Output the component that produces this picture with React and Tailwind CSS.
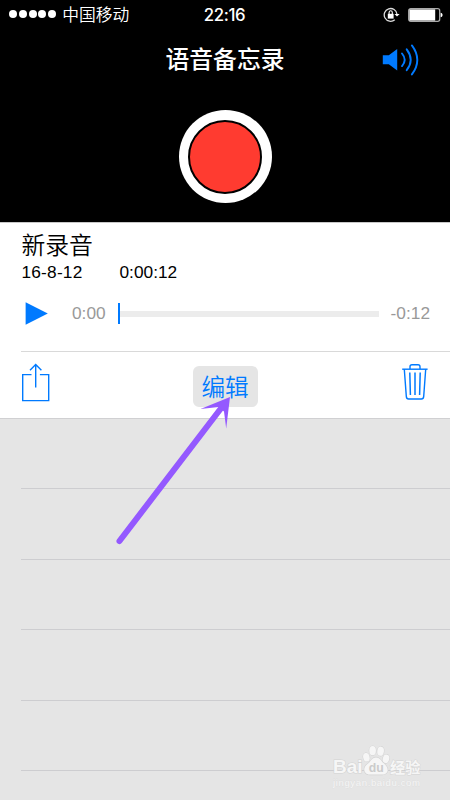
import { Fragment } from 'react';

const SIGNAL_DOTS = [0, 1, 2, 3, 4];
const EMPTY_ROWS = [0, 1, 2, 3, 4];

const StatusBar = () => (
  <div className="grid h-[29px] grid-cols-3 items-center pl-[9px] pr-[7px]">
    <div className="flex items-center">
      <div className="flex gap-[1.8px]">
        {SIGNAL_DOTS.map((dot) => (
          <span key={dot} className="size-2 rounded-full bg-white" />
        ))}
      </div>
      <span className="ml-[6px] whitespace-nowrap text-[16.8px] font-[350] leading-none">中国移动</span>
    </div>
    <span className="pr-[3px] pt-px text-center text-[16.8px] font-medium leading-none font-['Inter','Liberation_Sans',sans-serif] tracking-[-0.4px]">
      22:16
    </span>
    <div className="flex items-center justify-end gap-[8px]">
      <RotationLock />
      <Battery />
    </div>
  </div>
);

const RotationLock = () => (
  <svg width="17" height="16" viewBox="0 0 17 16" fill="none">
    <path d="M14 7.2A6.4 6.4 0 1 0 11.8 12.8" stroke="#ddd" strokeWidth="1.3" />
    <path d="M11.4 6.9h5.2l-2.6 2.6z" fill="#fff" />
    <rect x="4.8" y="6.8" width="5.8" height="4.8" fill="#fff" />
    <path d="M6.1 7V5.4a1.6 1.6 0 0 1 3.2 0V7" stroke="#fff" strokeWidth="1.1" />
  </svg>
);

const Battery = () => (
  <svg width="35" height="14" viewBox="0 0 35 14" fill="none">
    <rect x="0.7" y="0.7" width="31" height="12.6" rx="2" stroke="#aaa" strokeWidth="1.3" />
    <rect x="1.4" y="1.4" width="25.8" height="11.2" fill="#fff" />
    <path d="M32.6 4.8c2.6.4 2.6 4 0 4.4z" fill="#fff" />
  </svg>
);

const Speaker = () => (
  <svg width="38" height="32" viewBox="0 0 38 32" fill="none">
    <path d="M0.8 11.2h6L15.2 5v21.4L6.8 20.3h-6z" fill="#007aff" />
    <g stroke="#007aff" strokeWidth="1.9" strokeLinecap="round">
      <path d="M20 9.5q5.4 6.3 0 12.6" />
      <path d="M24.7 5.3q8 10.5 0 20.9" />
      <path d="M29.9 1.4q10.8 14.5 0 29" />
    </g>
  </svg>
);

const Share = () => (
  <svg width="30" height="40" viewBox="0 0 30 40" fill="none" stroke="#007aff" strokeWidth="1.4">
    <path d="M10.5 11.6H1.7v26h26v-26h-8.8" />
    <path d="M14.7 24.5V2M9 7.3l5.7-5.7 5.7 5.7" />
  </svg>
);

const Trash = () => (
  <svg width="26" height="38" viewBox="0 0 26 38" fill="none" stroke="#007aff" strokeWidth="1.4">
    <path d="M0.2 6.2h25.4" />
    <path d="M8 6V3.8Q8 1.7 10 1.7h6q2 0 2 2.1V6" />
    <path d="M2.3 6.2l2 27.2q.2 2.6 2.3 2.6h12.8q2.1 0 2.3-2.6l2-27.2" />
    <path d="M7.8 9.5l.6 22.5M13 9.5V32M18.2 9.5L17.6 32" strokeWidth="1.5" />
  </svg>
);

const Header = () => (
  <header className="h-[222px] bg-black text-white">
    <StatusBar />
    <div className="grid h-[61px] grid-cols-[1fr_auto_1fr] items-center pr-[30px] pl-[30px]">
      <span />
      <h1 className="pb-[3px] text-[23.8px] font-medium leading-none">语音备忘录</h1>
      <div className="flex justify-end">
        <Speaker />
      </div>
    </div>
    <div className="flex justify-center pt-[20px]">
      <button className="flex size-[93px] items-center justify-center rounded-full bg-white">
        <span className="size-[74px] rounded-full border-2 border-black bg-[#ff3b30]" />
      </button>
    </div>
  </header>
);

const Player = () => (
  <div className="flex h-[24px] items-center pl-[25px] pr-[20px] text-[17.3px] leading-none text-[#999] font-['Liberation_Sans',sans-serif]">
    <svg width="23" height="23" viewBox="0 0 23 23">
      <path d="M0.6 0.3L22.8 11.5 0.6 22.7z" fill="#007aff" />
    </svg>
    <span className="ml-[24px] w-[34px] pt-px">0:00</span>
    <div className="ml-[12px] mt-px flex flex-1 items-center">
      <span className="h-[21px] w-[2.4px] bg-[#007aff]" />
      <span className="h-[6px] flex-1 bg-[#ececec]" />
    </div>
    <span className="ml-[11px] w-[40px] pt-px text-right">-0:12</span>
  </div>
);

const Recording = () => (
  <section className="flex h-[196px] flex-col border-t border-[#c8c8c8] bg-white text-black">
    <div className="h-[78px] pt-[9px] pl-[21.5px]">
      <h2 className="text-[23.8px] font-[350] leading-[24px]">新录音</h2>
      <div className="mt-[6px] flex text-[17.3px] leading-[20px] font-['Liberation_Sans',sans-serif]">
        <span className="w-[98px] tracking-[0.2px]">16-8-12</span>
        <span>0:00:12</span>
      </div>
    </div>
    <Player />
    <div className="ml-[21px] mt-[26px] h-px bg-[#d9d9d9]" />
    <div className="flex flex-1 items-start justify-between pl-[21px] pr-[22px] pt-[11px]">
      <Share />
      <button className="ml-[-3px] mt-[3px] flex h-[41px] w-[65px] items-center justify-center rounded-[6px] bg-[#e5e5e5] text-[23.6px] font-[350] leading-none text-[#007aff]">
        编辑
      </button>
      <Trash />
    </div>
  </section>
);

const Pointer = () => (
  <svg className="absolute left-0 top-0" width="450" height="800" viewBox="0 0 450 800">
    <path d="M119.5 541L222 407" stroke="#9459ff" strokeWidth="6" strokeLinecap="round" />
    <path d="M230 397L200.5 409 218.5 407 224 411.5 226.2 428.5z" fill="#9459ff" />
  </svg>
);

const Watermark = () => (
  <svg className="absolute bottom-0 right-0" width="124" height="60" viewBox="0 0 124 60">
    <g fill="#f6f6f6" stroke="#d4d4d4" strokeWidth="1.2" paintOrder="stroke">
      <text x="7" y="33" fontSize="19" fontWeight="700" fontFamily="Liberation Sans, sans-serif" textLength="29.5" lengthAdjust="spacingAndGlyphs">Bai</text>
      <ellipse cx="40.4" cy="17.3" rx="3.2" ry="4.3" transform="rotate(-12 40.4 17.3)" />
      <ellipse cx="46.6" cy="10.7" rx="3.3" ry="4.6" />
      <ellipse cx="54.6" cy="11.2" rx="3.3" ry="4.6" transform="rotate(8 54.6 11.2)" />
      <ellipse cx="60" cy="18.8" rx="3.2" ry="4.3" transform="rotate(15 60 18.8)" />
      <path d="M50 17.4c-4.3 0-5.2 4.2-7.9 6.2-6.6 4.6-3.7 11 1.5 11h12.6c6 0 7.7-6 1.8-11-2.7-2-3.5-6.2-8-6.2z" />
      <text x="64" y="32.8" fontSize="15.2" fontWeight="700" fontFamily="Noto Sans CJK SC, sans-serif" strokeWidth="0.9">经验</text>
    </g>
    <text x="7" y="46" fontSize="9.6" fill="#f6f6f6" stroke="#d8d8d8" strokeWidth="0.4" paintOrder="stroke" fontFamily="Liberation Sans, sans-serif" textLength="87" lengthAdjust="spacing">jingyan.baidu.com</text>
    <text x="42.8" y="32" fontSize="13.5" fontWeight="700" fill="#cbcbcb" fontFamily="Liberation Sans, sans-serif" textLength="15" lengthAdjust="spacingAndGlyphs">du</text>
  </svg>
);

export default function App() {
  return (
    <div className="relative h-[800px] w-[450px] overflow-hidden bg-[#e5e5e5] font-['Noto_Sans_CJK_SC',sans-serif]">
      <Header />
      <Recording />
      <div className="h-px bg-[#d0d0d2]" />
      {EMPTY_ROWS.map((row) => (
        <Fragment key={row}>
          <div className="h-[69.4px]" />
          <div className="ml-[21px] h-px bg-[#cdcdd0]" />
        </Fragment>
      ))}
      <Pointer />
      <Watermark />
    </div>
  );
}
